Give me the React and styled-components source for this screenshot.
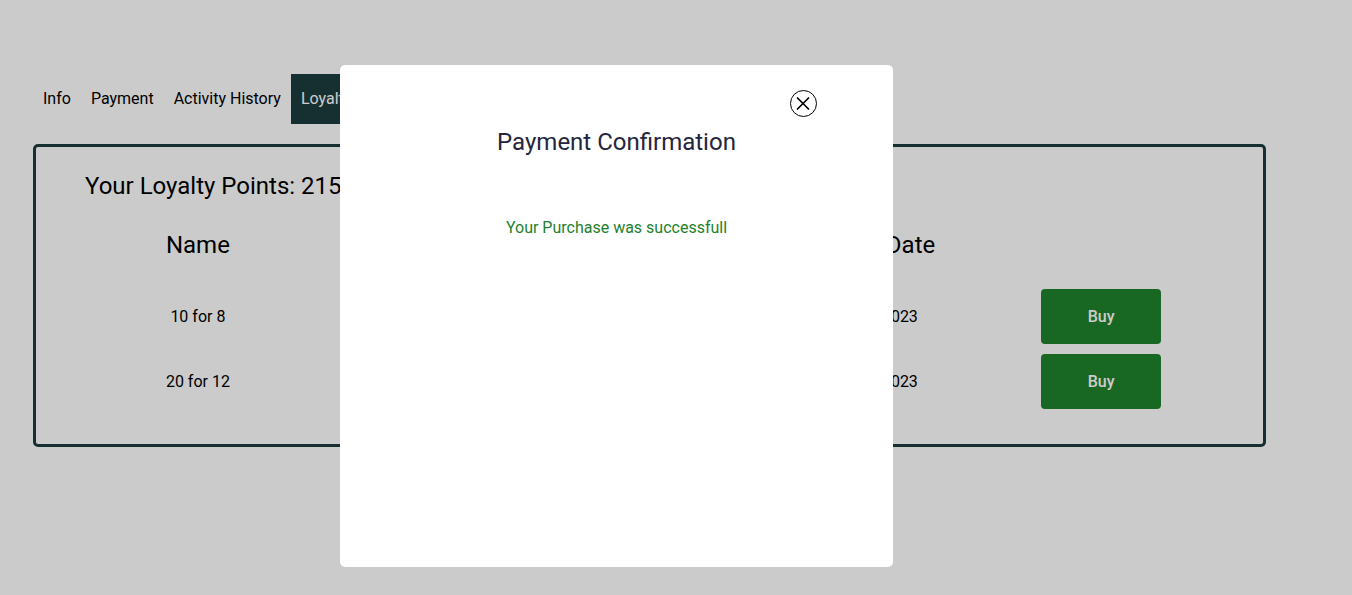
import React, { useState } from "react";
import styled, { createGlobalStyle } from "styled-components";

const GlobalStyle = createGlobalStyle`
  * { box-sizing: border-box; }
  body {
    margin: 0;
    background: #fefefe;
    color: #000;
    font-family: Roboto, "Liberation Sans", sans-serif;
    font-size: 16px;
    line-height: 20px;
  }
`;

const Page = styled.main`
  padding: 74px 86px 40px 33px;
`;

const Tabs = styled.nav`
  display: flex;
  margin-bottom: 20px;
`;

const Tab = styled.a`
  padding: 15px 10px;
  text-decoration: none;
  white-space: nowrap;
  color: ${(p) => (p.$active ? "#fff" : "#000")};
  background: ${(p) => (p.$active ? "#1c3d3f" : "transparent")};
`;

const Panel = styled.section`
  padding: 25px 49px 30px;
  border: 3px solid #1c3d3f;
  border-radius: 5px;
`;

const PanelTitle = styled.h2`
  margin: 0;
  font-size: 24px;
  font-weight: 400;
  line-height: 28px;
`;

const OfferTable = styled.table`
  width: 100%;
  margin-top: 31px;
  table-layout: fixed;
  border-collapse: collapse;
  text-align: center;
`;

const HeadCell = styled.th`
  padding: 0 0 25px;
  font-size: 24px;
  font-weight: 400;
  line-height: 28px;
`;

const Cell = styled.td`
  padding: 5px 0;
`;

const BuyButton = styled.button`
  display: block;
  width: 120px;
  height: 55px;
  margin: 0 auto;
  border: 0;
  border-radius: 4px;
  background: #1f812b;
  color: #fff;
  font: 500 16px/20px Roboto, "Liberation Sans", sans-serif;
  cursor: pointer;
`;

const Overlay = styled.div`
  position: fixed;
  inset: 0;
  display: flex;
  justify-content: center;
  padding: 65px 119px 28px 0;
  background: rgba(0, 0, 0, 0.2);
`;

const Dialog = styled.div`
  display: flex;
  flex-direction: column;
  align-items: center;
  width: 100%;
  max-width: 553px;
  padding: 25px 76px;
  border-radius: 5px;
  background: #fff;
`;

const CloseButton = styled.button`
  display: flex;
  align-self: flex-end;
  padding: 0;
  border: 0;
  background: none;
  cursor: pointer;
`;

const DialogTitle = styled.h1`
  margin: 11px 0 62px;
  color: #25253d;
  font-size: 24px;
  font-weight: 400;
  line-height: 28px;
`;

const Message = styled.p`
  margin: 0;
  color: #1f812b;
`;

const tabs = ["Info", "Payment", "Activity History", "Loyalty"];

const offers = [
  { name: "10 for 8", points: 80, start: "01/01/2023", end: "12/31/2023" },
  { name: "20 for 12", points: 120, start: "01/01/2023", end: "12/31/2023" },
];

export default function App() {
  const [open, setOpen] = useState(true);
  return (
    <>
      <GlobalStyle />
      <Page>
        <Tabs>
          {tabs.map((tab) => (
            <Tab key={tab} href="#" $active={tab === "Loyalty"}>{tab}</Tab>
          ))}
        </Tabs>
        <Panel>
          <PanelTitle>Your Loyalty Points: 215</PanelTitle>
          <OfferTable>
            <thead>
              <tr>
                <HeadCell>Name</HeadCell>
                <HeadCell>Points</HeadCell>
                <HeadCell>Start Date</HeadCell>
                <HeadCell>Expiry Date</HeadCell>
                <HeadCell aria-label="Action" />
              </tr>
            </thead>
            <tbody>
              {offers.map((offer) => (
                <tr key={offer.name}>
                  <Cell>{offer.name}</Cell>
                  <Cell>{offer.points}</Cell>
                  <Cell>{offer.start}</Cell>
                  <Cell>{offer.end}</Cell>
                  <Cell>
                    <BuyButton onClick={() => setOpen(true)}>Buy</BuyButton>
                  </Cell>
                </tr>
              ))}
            </tbody>
          </OfferTable>
        </Panel>
      </Page>
      {open && (
        <Overlay>
          <Dialog role="dialog" aria-modal="true" aria-labelledby="dialog-title">
            <CloseButton aria-label="Close" onClick={() => setOpen(false)}>
              <svg width="27" height="27" viewBox="0 0 27 27" fill="none" stroke="#000">
                <circle cx="13.5" cy="13.5" r="13" />
                <path d="M7.5 8 18.5 19M18.5 8 7.5 19" strokeWidth="1.7" strokeLinecap="round" />
              </svg>
            </CloseButton>
            <DialogTitle id="dialog-title">Payment Confirmation</DialogTitle>
            <Message>Your Purchase was successfull</Message>
          </Dialog>
        </Overlay>
      )}
    </>
  );
}
